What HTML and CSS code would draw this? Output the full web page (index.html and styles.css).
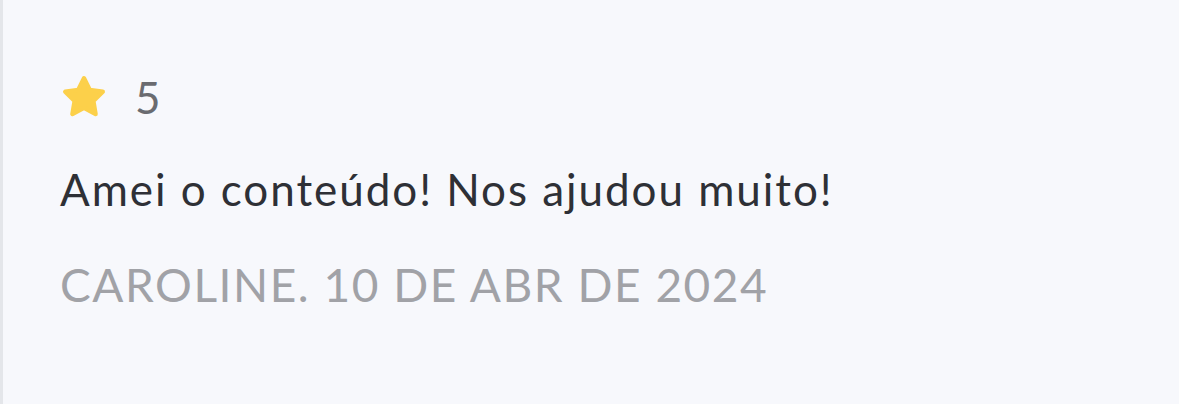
FILE: index.html
```html
<!DOCTYPE html>
<html lang="pt-BR">
<head>
    <meta charset="UTF-8">
    <meta name="viewport" content="width=device-width, initial-scale=1.0">
    <title>Avaliação</title>
    <link rel="stylesheet" href="styles.css">
</head>
<body>
    <article class="review">
        <div class="rating">
            <svg class="star" viewBox="0 0 24 24" width="48" height="48">
                <path d="M12 2.6l2.9 5.9 6.5.9-4.7 4.6 1.1 6.5L12 17.4l-5.8 3.1 1.1-6.5-4.7-4.6 6.5-.9z"
                      fill="#fcd04a" stroke="#fcd04a" stroke-width="2.2" stroke-linejoin="round"/>
            </svg>
            <span class="score">5</span>
        </div>
        <p class="comment">Amei o conteúdo! Nos ajudou muito!</p>
        <p class="author">CAROLINE. 10 DE ABR DE 2024</p>
    </article>
</body>
</html>
```

FILE: styles.css
```css
* {
    margin: 0;
    padding: 0;
    box-sizing: border-box;
}
html, body {
    height: 100%;
}
body {
    font-family: Lato, "Open Sans", sans-serif;
    background-color: #f7f8fc;
}
.review {
    height: 100%;
    border-left: 3px solid #e4e6ea;
    padding: 73px 40px 0 57px;
    display: flex;
    flex-direction: column;
    gap: 40px;
}
.rating {
    display: flex;
    align-items: center;
    gap: 27px;
}
.star {
    display: block;
}
.score {
    font-size: 44px;
    color: #6a6b70;
    line-height: 1;
}
.comment {
    font-size: 44px;
    line-height: 56px;
    letter-spacing: 1.95px;
    color: #2e3036;
}
.author {
    font-size: 46px;
    line-height: 56px;
    letter-spacing: 1.55px;
    color: #a1a2a7;
}
```
